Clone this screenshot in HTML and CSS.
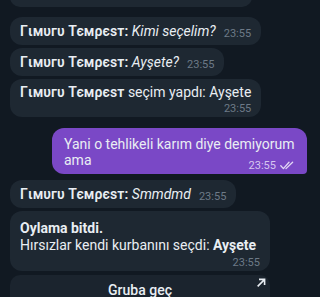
FILE: index.html
```html
<!DOCTYPE html>
<html lang="tr">
<head>
<meta charset="utf-8">
<title>Chat</title>
<link rel="stylesheet" href="styles.css">
</head>
<body>
<div class="chat">
  <div class="bubble prev"></div>

  <div class="bubble">
    <div class="row"><span class="txt"><b class="name">Гιмυгυ Тємρєѕт:</b> <i>Kimi seçelim?</i></span><span class="time">23:55</span></div>
  </div>

  <div class="bubble">
    <div class="row"><span class="txt"><b class="name">Гιмυгυ Тємρєѕт:</b> <i>Ayşete?</i></span><span class="time">23:55</span></div>
  </div>

  <div class="bubble choice">
    <div class="txt"><b class="name">Гιмυгυ Тємρєѕт</b> seçim yapdı: Ayşete</div>
    <div class="meta"><span class="time">23:55</span></div>
  </div>

  <div class="bubble out">
    <div class="txt">Yani o tehlikeli karım diye demiyorum<br>ama</div>
    <div class="meta out-meta"><span class="time">23:55</span>
      <svg class="ticks" width="15" height="9" viewBox="0 0 15 9"><path d="M0.8 4.8 L3.4 7.6 L9 1.2 M6 7.6 L12.6 1.2" fill="none" stroke="currentColor" stroke-width="1.3" stroke-linecap="round" stroke-linejoin="round"/></svg>
    </div>
  </div>

  <div class="bubble">
    <div class="row"><span class="txt"><b class="name">Гιмυгυ Тємρєѕт:</b> <i>Smmdmd</i></span><span class="time">23:55</span></div>
  </div>

  <div class="group">
    <div class="bubble result">
      <div class="txt"><b>Oylama bitdi.</b><br>Hırsızlar kendi kurbanını seçdi: <b>Ayşete</b></div>
      <div class="meta"><span class="time">23:55</span></div>
    </div>
    <div class="button">
      <span>Gruba geç</span>
      <svg class="arrow" width="9" height="9" viewBox="0 0 9 9"><path d="M1.2 7.8 L7.4 1.6 M2.8 1.4 H7.6 V6.2" fill="none" stroke="currentColor" stroke-width="1.6" stroke-linecap="square"/></svg>
    </div>
  </div>
</div>
</body>
</html>
```

FILE: styles.css
```css
html, body {
  margin: 0;
  padding: 0;
}
body {
  width: 320px;
  height: 297px;
  overflow: hidden;
  background: #111922;
  font-family: Roboto, "Noto Sans", "DejaVu Sans", sans-serif;
  color: #e9eef3;
}
.chat {
  display: flex;
  flex-direction: column;
  align-items: flex-start;
  padding-left: 10px;
  margin-top: -13px;
}
.bubble {
  background: #1e2832;
  border-radius: 12px;
  padding: 6px 10px 6px 10px;
  font-size: 14px;
  line-height: 16px;
  margin-bottom: 3px;
  box-sizing: border-box;
}
.bubble.prev {
  width: 242px;
  height: 20px;
  margin-bottom: 10px;
}
.row {
  display: flex;
  align-items: flex-end;
  gap: 8px;
}
.name {
  font-weight: 600;
  letter-spacing: 0.1px;
}
.time {
  font-size: 11px;
  line-height: 12px;
  color: #6d7a87;
  position: relative;
  top: 1px;
}
.meta {
  display: flex;
  justify-content: flex-end;
  align-items: center;
  gap: 4px;
  margin-top: 2px;
  line-height: 12px;
}
.bubble.choice {
  padding-top: 5px;
  padding-bottom: 3px;
  margin-bottom: 11px;
}
.bubble.out {
  align-self: flex-end;
  margin-right: 13px;
  width: 255px;
  background: #7a48c6;
  padding: 8px 12px 3px 12px;
  border-radius: 12px 12px 4px 12px;
  margin-bottom: 6px;
}
.out-meta {
  margin-top: -9px;
}
.out-meta .time {
  color: #d6c6f0;
}
.ticks {
  color: #e3d8f5;
}
.group {
  display: flex;
  flex-direction: column;
  width: 260px;
}
.bubble.result {
  padding: 9px 10px 3px 10px;
  line-height: 17px;
  margin-bottom: 4px;
}
.button {
  position: relative;
  background: #1b242e;
  border-radius: 10px 10px 0 0;
  display: flex;
  justify-content: center;
  padding: 7px 0 2px;
  font-size: 14px;
  line-height: 16px;
  font-weight: 500;
  color: #e9eef3;
}
.arrow {
  position: absolute;
  top: 3px;
  right: 4px;
  color: #e9eef3;
}
```
